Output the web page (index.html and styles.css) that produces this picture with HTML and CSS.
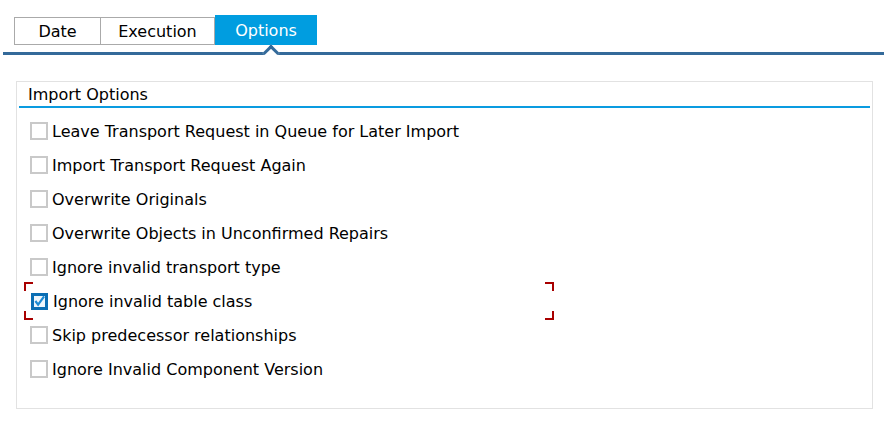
FILE: index.html
```html
<!DOCTYPE html>
<html>
<head>
  <title>Import Options</title>
  <link rel="stylesheet" href="styles.css">
</head>
<body>
  <div class="tabstrip">
    <div class="tabs">
      <div class="tab tab-date">Date</div>
      <div class="tab tab-exec">Execution</div>
      <div class="tab tab-opts active">Options</div>
    </div>
    <div class="tab-line">
      <span class="notch"></span>
    </div>
  </div>

  <div class="group">
    <div class="group-title">Import Options</div>
    <div class="options">
      <label class="option"><span class="box"></span>Leave Transport Request in Queue for Later Import</label>
      <label class="option"><span class="box"></span>Import Transport Request Again</label>
      <label class="option"><span class="box"></span>Overwrite Originals</label>
      <label class="option"><span class="box"></span>Overwrite Objects in Unconfirmed Repairs</label>
      <label class="option"><span class="box"></span>Ignore invalid transport type</label>
      <label class="option focused">
        <span class="box checked">
          <svg width="12" height="12" viewBox="0 0 12 12"><path d="M1.5 6 L4.5 10 L11 1" fill="none" stroke="#1b8ad3" stroke-width="2.4"/></svg>
        </span>Ignore invalid table class
        <span class="corner tl"></span><span class="corner tr"></span>
        <span class="corner bl"></span><span class="corner br"></span>
      </label>
      <label class="option"><span class="box"></span>Skip predecessor relationships</label>
      <label class="option"><span class="box"></span>Ignore Invalid Component Version</label>
    </div>
  </div>
</body>
</html>
```

FILE: styles.css
```css
body {
  margin: 0;
  background: #ffffff;
  color: #000000;
  font-family: "DejaVu Sans", Tahoma, sans-serif;
  font-size: 16px;
}

/* tab strip */
.tabstrip {
  padding-top: 15px;
}

.tabs {
  display: flex;
  margin-left: 14px;
  height: 30px;
}

.tab {
  box-sizing: border-box;
  border: 1px solid #aaaaaa;
  margin-top: 2px;
  height: 28px;
  display: flex;
  align-items: center;
  justify-content: center;
}

.tab-date { width: 87px; }
.tab-exec { width: 114px; border-left: none; }
.tab-opts { width: 102px; }

.tab.active {
  margin-top: 0;
  height: 30px;
  border: none;
  background: #009de0;
  color: #ffffff;
}

.tab-line {
  position: relative;
  margin: 7px 0 0 3px;
  height: 3px;
  background: #346a9a;
}

.notch {
  position: absolute;
  left: 262px;
  top: -5px;
  width: 9px;
  height: 9px;
  background: #ffffff;
  border-top: 3px solid #346a9a;
  border-left: 3px solid #346a9a;
  transform: rotate(45deg);
}

/* group box */
.group {
  margin: 26px 11px 0 16px;
  border: 1px solid #e2e2e2;
  height: 324px;
  padding: 2px 2px 0 2px;
}

.group-title {
  padding-left: 9px;
  height: 22px;
  line-height: 22px;
  border-bottom: 2px solid #0a9be0;
}

.options {
  padding-top: 6px;
  padding-left: 11px;
}

.option {
  position: relative;
  display: flex;
  align-items: center;
  height: 34px;
  width: 517px;
}

.box {
  box-sizing: border-box;
  width: 18px;
  height: 18px;
  border: 2px solid #c9c9c9;
  margin-right: 4px;
  background: #ffffff;
}

.box.checked {
  width: 17px;
  height: 17px;
  margin: 0 5px 0 1px;
  border: 3px solid #0a6eb4;
  background: #eef6fc;
  display: flex;
  align-items: center;
  justify-content: center;
}

/* focus brackets */
.corner {
  position: absolute;
  width: 7px;
  height: 7px;
  border: 0 solid #a80000;
}

.tl { left: -6px; top: -2px; border-top-width: 2px; border-left-width: 2px; }
.tr { right: -7px; top: -2px; border-top-width: 2px; border-right-width: 2px; }
.bl { left: -6px; bottom: -2px; border-bottom-width: 2px; border-left-width: 2px; }
.br { right: -7px; bottom: -2px; border-bottom-width: 2px; border-right-width: 2px; }
```
